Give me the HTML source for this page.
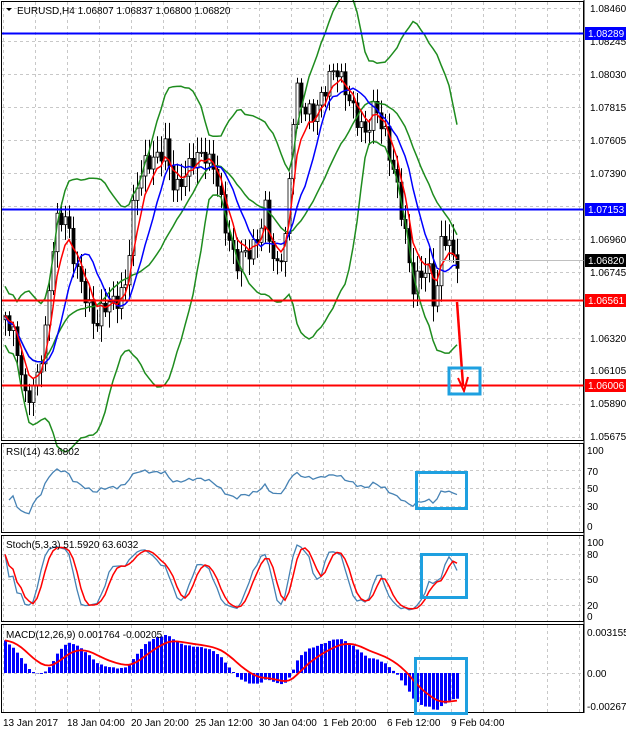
<!DOCTYPE html>
<html><head><meta charset="utf-8"><style>
body{margin:0;background:#fff;width:626px;height:734px;overflow:hidden;font-family:"Liberation Sans",sans-serif}
svg text{font-family:"Liberation Sans",sans-serif;font-size:10px}
</style></head><body>
<svg id="s" width="626" height="734" xmlns="http://www.w3.org/2000/svg">
<rect width="626" height="734" fill="#fff"/>
<g id="grid" stroke="#c8c8c8" stroke-dasharray="3,3" stroke-width="1"></g>
<g id="plot"></g>
<g stroke="#000" stroke-width="1" fill="none">
<rect x="1.5" y="1.5" width="582" height="439"/>
<rect x="1.5" y="443.5" width="582" height="89"/>
<rect x="1.5" y="535.5" width="582" height="86"/>
<rect x="1.5" y="624.5" width="582" height="88"/>
</g>
<line x1="2" y1="33.5" x2="584" y2="33.5" stroke="#0000ff" stroke-width="2"/>
<line x1="2" y1="209.5" x2="584" y2="209.5" stroke="#0000ff" stroke-width="2"/>
<line x1="2" y1="300.5" x2="584" y2="300.5" stroke="#ff0000" stroke-width="2"/>
<line x1="2" y1="385.5" x2="584" y2="385.5" stroke="#ff0000" stroke-width="2"/>
<line x1="440" y1="260.5" x2="584" y2="260.5" stroke="#c0c0c0"/>
<path d="M457,302 L463,385" stroke="#ff0000" stroke-width="2.5" fill="none"/>
<path d="M458,378 L464,391 L468,377" stroke="#ff0000" stroke-width="2" fill="none"/>
<g stroke="#1ea0e0" stroke-width="3" fill="none">
<rect x="449" y="368" width="31" height="26"/>
<rect x="416.5" y="472.5" width="50" height="36"/>
<rect x="421.5" y="554.5" width="45" height="43"/>
<rect x="415.5" y="658.5" width="51" height="55"/>
</g>
<path d="M6,8 L12,8 L9,11 Z" fill="#000"/>
<text x="17" y="14" fill="#000">EURUSD,H4  1.06807 1.06837 1.06800 1.06820</text>
<text x="6" y="455" fill="#000">RSI(14) 43.6802</text>
<text x="6" y="548" fill="#000">Stoch(5,3,3) 51.5920 63.6032</text>
<text x="6" y="638" fill="#000">MACD(12,26,9) 0.001764 -0.00205</text>
<g fill="#000" id="ax">
<text x="590" y="12">1.08460</text>
<text x="590" y="45">1.08245</text>
<text x="590" y="78">1.08030</text>
<text x="590" y="111">1.07815</text>
<text x="590" y="144">1.07605</text>
<text x="590" y="177">1.07390</text>
<text x="590" y="243">1.06960</text>
<text x="590" y="276">1.06745</text>
<text x="590" y="342">1.06320</text>
<text x="590" y="374">1.06105</text>
<text x="590" y="407">1.05890</text>
<text x="590" y="440">1.05675</text>
<text x="587" y="454">100</text><text x="587" y="475">70</text><text x="587" y="492">50</text><text x="587" y="510">30</text><text x="587" y="530">0</text>
<text x="587" y="546">100</text><text x="587" y="558">80</text><text x="587" y="583">50</text><text x="587" y="609">20</text><text x="587" y="620">0</text>
<text x="587" y="636">0.003155</text><text x="587" y="677">0.00</text><text x="587" y="710">-0.002677</text>
<text x="3" y="726">13 Jan 2017</text><text x="67" y="726">18 Jan 04:00</text><text x="131" y="726">20 Jan 20:00</text>
<text x="195" y="726">25 Jan 12:00</text><text x="259" y="726">30 Jan 04:00</text><text x="323" y="726">1 Feb 20:00</text>
<text x="387" y="726">6 Feb 12:00</text><text x="451" y="726">9 Feb 04:00</text>
</g>
<rect x="585" y="27" width="41" height="13" fill="#0000ff"/><text x="588" y="37" fill="#fff">1.08289</text>
<rect x="585" y="203" width="41" height="13" fill="#0000ff"/><text x="588" y="213" fill="#fff">1.07153</text>
<rect x="585" y="254" width="41" height="13" fill="#000"/><text x="588" y="264" fill="#fff">1.06820</text>
<rect x="585" y="294" width="41" height="13" fill="#ff0000"/><text x="588" y="304" fill="#fff">1.06561</text>
<rect x="585" y="379" width="41" height="13" fill="#ff0000"/><text x="588" y="389" fill="#fff">1.06006</text>
<g stroke="#000"><line x1="584" y1="0" x2="584" y2="713"/></g>
</svg>
<script>
var NS="http://www.w3.org/2000/svg";
function el(p,t,a){var e=document.createElementNS(NS,t);for(var k in a)e.setAttribute(k,a[k]);p.appendChild(e);return e;}
var grid=document.getElementById('grid'),plot=document.getElementById('plot');
for(var x=3;x<584;x+=32){[[2,440],[444,532],[536,621],[625,712]].forEach(function(r){el(grid,'line',{x1:x+.5,y1:r[0],x2:x+.5,y2:r[1]});});}
for(var y=8;y<440;y+=33)el(grid,'line',{x1:2,y1:y+.5,x2:583,y2:y+.5});
[470,488,506].forEach(function(y){el(grid,'line',{x1:2,y1:y+.5,x2:583,y2:y+.5});});
[554,579,605].forEach(function(y){el(grid,'line',{x1:2,y1:y+.5,x2:583,y2:y+.5});});
el(grid,'line',{x1:2,y1:673.5,x2:583,y2:673.5});
var kp=[[3,310],[10,330],[18,360],[25,400],[35,380],[45,330],[55,230],[65,220],[75,260],[85,290],[95,330],[105,310],[115,300],[125,280],[135,190],[145,170],[155,160],[165,140],[175,190],[185,180],[195,160],[205,150],[215,165],[225,230],[235,270],[245,250],[255,240],[265,210],[275,280],[285,240],[295,80],[305,110],[315,120],[325,90],[335,60],[345,85],[355,120],[365,140],[375,100],[385,130],[395,180],[405,240],[412,290],[420,270],[428,260],[435,310],[442,235],[450,255],[456,262]];
function interp(x){for(var i=1;i<kp.length;i++)if(x<=kp[i][0]){var a=kp[i-1],b=kp[i];return a[1]+(b[1]-a[1])*(x-a[0])/(b[0]-a[0]);}return kp[kp.length-1][1];}
var N=114,X=[],C=[],H=[],L=[],O=[];
for(var i=0;i<N;i++){var x=5+4*i;X.push(x);var n=Math.sin(i*2.3)*9+Math.sin(i*5.7)*6;C.push(interp(x)+n);}
for(var i=0;i<N;i++){O[i]=i?C[i-1]:C[i]+4;var hi=Math.min(O[i],C[i]),lo=Math.max(O[i],C[i]);H[i]=hi-4-Math.abs(Math.sin(i*3.1))*12;L[i]=lo+4+Math.abs(Math.cos(i*1.7))*12;}
for(var i=0;i<N;i++){var x=X[i];el(plot,'line',{x1:x+.5,y1:H[i],x2:x+.5,y2:L[i],stroke:'#000'});
var t=Math.min(O[i],C[i]),b=Math.max(O[i],C[i]);if(b-t<1)b=t+1;el(plot,'rect',{x:x-1,y:t,width:3,height:b-t,fill:C[i]<O[i]?'#fff':'#000',stroke:'#000','stroke-width':.8});}
function pl(pts,col,w,g){el(g||plot,'polyline',{points:pts.map(function(p){return p[0]+','+p[1];}).join(' '),fill:'none',stroke:col,'stroke-width':w||1.5});}
var up=[],mid=[],lw=[],blue=[],red=[];
for(var i=0;i<N;i++){var s=Math.max(0,i-19),arr=C.slice(s,i+1),m=arr.reduce(function(a,b){return a+b})/arr.length;var v=Math.sqrt(arr.reduce(function(a,b){return a+(b-m)*(b-m)},0)/arr.length);var sd=Math.max(v,14)*2.1;
up.push([X[i],m-sd]);lw.push([X[i],m+sd]);mid.push([X[i],m]);
var s2=Math.max(0,i-9),a2=C.slice(s2,i+1);blue.push([X[i],a2.reduce(function(a,b){return a+b})/a2.length]);}
var e=C[0];for(var i=0;i<N;i++){e=e+(C[i]-e)*0.33;red.push([X[i],e]);}
pl(up,'#1e8c1e',1.5);pl(lw,'#1e8c1e',1.5);pl(mid,'#1e8c1e',1.5);pl(blue,'#0000ff',1.5);pl(red,'#ff0000',1.5);
var P=C.map(function(c){return -c;}),rsi=[];var ag=1,al=1;
for(var i=1;i<N;i++){var d=P[i]-P[i-1];ag=(ag*13+Math.max(d,0))/14;al=(al*13+Math.max(-d,0))/14;var r=100-100/(1+ag/al);r=50+(r-50)*0.9;rsi.push([X[i],526-r*0.77]);}
pl(rsi,'#4682b4',1.3);
var K=[],kk=[],dd=[];
for(var i=0;i<N;i++){var s=Math.max(0,i-4),hs=-1e9,ls=1e9;for(var j=s;j<=i;j++){hs=Math.max(hs,-H[j]);ls=Math.min(ls,-L[j]);}K.push((P[i]-ls)/(hs-ls||1)*100);}
for(var i=0;i<N;i++){var s=Math.max(0,i-2),a=K.slice(s,i+1);kk.push(a.reduce(function(x,y){return x+y})/a.length);}
for(var i=0;i<N;i++){var s=Math.max(0,i-2),a=kk.slice(s,i+1);dd.push(a.reduce(function(x,y){return x+y})/a.length);}
pl(kk.map(function(v,i){return [X[i],616-v*0.74];}),'#4682b4',1.3);
pl(dd.map(function(v,i){return [X[i],616-v*0.74];}),'#ff0000',1.5);
var e12=P[0]+10,e26=P[0]-30,mac=[],sig=[],sg=0;
for(var i=0;i<N;i++){e12+= (P[i]-e12)*2/13;e26+=(P[i]-e26)*2/27;mac.push(e12-e26);}
var mx=Math.max.apply(null,mac.map(Math.abs));
sg=mac[0];for(var i=0;i<N;i++){sg+=(mac[i]-sg)*0.2;sig.push(sg);}
for(var i=0;i<N;i++){var v=mac[i]/mx*38,y0=673;el(plot,'rect',{x:X[i]-1,y:v>0?y0-v:y0,width:3,height:Math.abs(v)||0.5,fill:'#0000ff'});}
pl(sig.map(function(v,i){return [X[i],673-v/mx*38];}),'#ff0000',1.8);
</script>
</body></html>
